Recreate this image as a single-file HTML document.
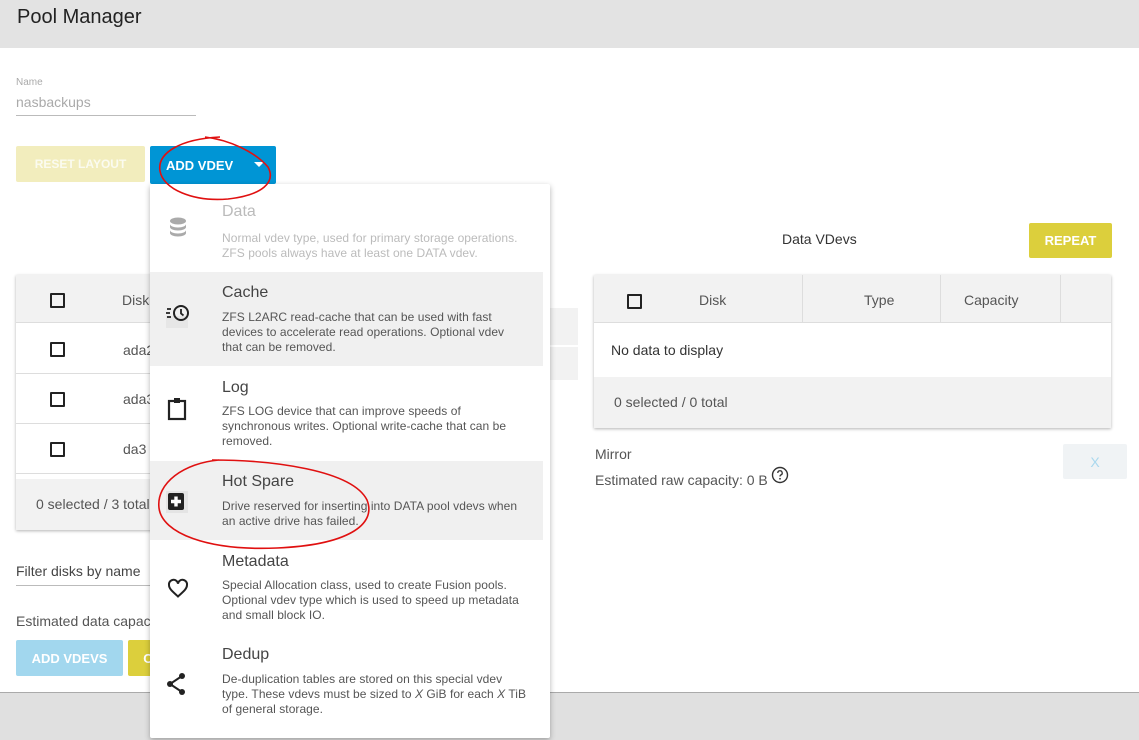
<!DOCTYPE html>
<html><head><meta charset="utf-8"><style>
*{box-sizing:border-box;margin:0;padding:0}
body{width:1139px;height:740px;position:relative;overflow:hidden;background:#fff;font-family:"Liberation Sans",Roboto,sans-serif;color:#333}
.a{position:absolute}
.btn{position:absolute;color:#fff;font-weight:bold;font-size:13px;display:flex;align-items:center;justify-content:center;border-radius:2px}
.cb{position:absolute;width:15px;height:15px;border:2px solid #222;border-radius:1px}
.mi{position:absolute;left:150px;width:393px}
.mi .t{position:absolute;left:72px;font-size:16px;color:#444}
.mi .d{position:absolute;left:72px;font-size:12px;line-height:15px;color:#555;white-space:nowrap;letter-spacing:0.05px}
.mi svg{position:absolute;left:16px}
</style></head><body>
<div class="a" style="left:0;top:0;width:1139px;height:48px;background:#e3e3e3"></div>
<div class="a" style="left:17px;top:6px;font-size:20px;color:#222">Pool Manager</div>
<div class="a" style="left:16px;top:77px;font-size:10px;color:#aaa">Name</div>
<div class="a" style="left:16px;top:94px;font-size:14px;color:#aaa">nasbackups</div>
<div class="a" style="left:16px;top:115px;width:180px;height:1px;background:#bbb"></div>
<div class="btn" style="left:16px;top:146px;width:129px;height:36px;background:#f2edbd;color:#fbfbf0;font-size:12px">RESET LAYOUT</div>
<div class="btn" style="left:150px;top:146px;width:126px;height:38px;background:#0095d5;justify-content:flex-start;padding-left:16px">ADD VDEV<span style="position:absolute;left:104px;top:16px;border:5px solid transparent;border-top:5px solid #fff;border-bottom:0"></span></div>

<div class="a" style="left:16px;top:275px;width:140px;height:255px;box-shadow:0 1px 3px rgba(0,0,0,.3);background:#fff"></div>
<div class="a" style="left:16px;top:275px;width:140px;height:48px;background:#f2f2f2;border-bottom:1px solid #ddd"></div>
<div class="cb" style="left:50px;top:293px"></div><div class="a" style="left:122px;top:292px;font-size:14px;color:#555">Disk</div>
<div class="cb" style="left:50px;top:342px"></div><div class="a" style="left:123px;top:342px;font-size:14px;color:#555">ada2</div>
<div class="a" style="left:16px;top:373px;width:140px;height:1px;background:#ddd"></div>
<div class="cb" style="left:50px;top:392px"></div><div class="a" style="left:123px;top:391px;font-size:14px;color:#555">ada3</div>
<div class="a" style="left:16px;top:423px;width:140px;height:1px;background:#ddd"></div>
<div class="cb" style="left:50px;top:442px"></div><div class="a" style="left:123px;top:441px;font-size:14px;color:#555">da3</div>
<div class="a" style="left:16px;top:473px;width:140px;height:1px;background:#ddd"></div>
<div class="a" style="left:16px;top:479px;width:140px;height:51px;background:#f2f2f2"></div>
<div class="a" style="left:36px;top:496px;font-size:14px;color:#555">0 selected / 3 total</div>
<div class="a" style="left:16px;top:563px;font-size:14px;color:#444">Filter disks by name</div>
<div class="a" style="left:16px;top:585px;width:140px;height:1px;background:#bbb"></div>
<div class="a" style="left:16px;top:613px;font-size:14px;color:#555">Estimated data capacity</div>
<div class="btn" style="left:16px;top:640px;width:107px;height:36px;background:#a2d7ee">ADD VDEVS</div>
<div class="btn" style="left:128px;top:640px;width:40px;height:36px;background:#dccf3c">C</div>

<div class="a" style="left:549px;top:308px;width:29px;height:37px;background:#f2f2f2"></div>
<div class="a" style="left:549px;top:347px;width:29px;height:33px;background:#f2f2f2"></div>

<div class="a" style="left:782px;top:231px;font-size:14px;color:#333">Data VDevs</div>
<div class="btn" style="left:1029px;top:223px;width:83px;height:35px;background:#dccf3c">REPEAT</div>
<div class="a" style="left:594px;top:275px;width:517px;height:153px;box-shadow:0 1px 3px rgba(0,0,0,.3);background:#fff"></div>
<div class="a" style="left:594px;top:275px;width:517px;height:48px;background:#f2f2f2;border-bottom:1px solid #ddd"></div>
<div class="a" style="left:802px;top:275px;width:1px;height:48px;background:#ddd"></div>
<div class="a" style="left:940px;top:275px;width:1px;height:48px;background:#ddd"></div>
<div class="a" style="left:1060px;top:275px;width:1px;height:48px;background:#ddd"></div>
<div class="cb" style="left:627px;top:294px"></div>
<div class="a" style="left:699px;top:292px;font-size:14px;color:#555">Disk</div>
<div class="a" style="left:864px;top:292px;font-size:14px;color:#555">Type</div>
<div class="a" style="left:964px;top:292px;font-size:14px;color:#555">Capacity</div>
<div class="a" style="left:611px;top:342px;font-size:14px;color:#333">No data to display</div>
<div class="a" style="left:594px;top:377px;width:517px;height:51px;background:#f2f2f2"></div>
<div class="a" style="left:614px;top:394px;font-size:14px;color:#555">0 selected / 0 total</div>
<div class="a" style="left:595px;top:446px;font-size:14px;color:#555">Mirror</div>
<div class="a" style="left:595px;top:472px;font-size:14px;color:#555">Estimated raw capacity: 0 B</div>
<svg class="a" style="left:771px;top:466px" width="18" height="18" viewBox="0 0 18 18"><circle cx="9" cy="9" r="7.5" fill="none" stroke="#333" stroke-width="1.4"/><path d="M6.8 7a2.2 2.2 0 1 1 3 2c-.6.3-.8.7-.8 1.5" fill="none" stroke="#333" stroke-width="1.3"/><circle cx="9" cy="12.8" r=".9" fill="#333"/></svg>
<div class="btn" style="left:1063px;top:444px;width:64px;height:35px;background:#f0f3f5;color:#aad8ee;font-weight:normal;font-size:14px">X</div>

<div class="a" style="left:0;top:692px;width:1139px;height:48px;background:#e0e0e0;border-top:1px solid #aaa"></div>

<div class="a" style="left:150px;top:184px;width:400px;height:554px;background:#fff;box-shadow:0 2px 6px rgba(0,0,0,.3);border-radius:2px"></div>
<div class="mi" style="top:195px;height:75px">
<div class="t" style="top:8px;color:#bbb">Data</div>
<div class="d" style="top:36px;color:#bbb">Normal vdev type, used for primary storage operations.<br>ZFS pools always have at least one DATA vdev.</div>
<svg style="top:20px" width="24" height="24" viewBox="0 0 24 24"><g fill="#aaa"><ellipse cx="12" cy="6" rx="8" ry="3.5"/><path d="M4 9c0 2 3.6 3.5 8 3.5s8-1.5 8-3.5v3c0 2-3.6 3.5-8 3.5S4 14 4 12z"/><path d="M4 15c0 2 3.6 3.5 8 3.5s8-1.5 8-3.5v3c0 2-3.6 3.5-8 3.5S4 20 4 18z"/></g></svg>
</div>
<div class="mi" style="top:272px;height:94px;background:#f0f0f0">
<div class="t" style="top:12px">Cache</div>
<div class="d" style="top:38px">ZFS L2ARC read-cache that can be used with fast<br>devices to accelerate read operations. Optional vdev<br>that can be removed.</div>
<svg style="top:31px" width="26" height="26" viewBox="0 0 26 26"><rect x="0" y="13" width="22" height="12" fill="#e6e6e6"/><circle cx="15" cy="10" r="7" fill="none" stroke="#222" stroke-width="2"/><path d="M15 6v4.5l2.5 2" fill="none" stroke="#222" stroke-width="1.8"/><path d="M1 6h4M0 10h4M1 14h4" stroke="#222" stroke-width="1.8"/></svg>
</div>
<div class="mi" style="top:368px;height:90px">
<div class="t" style="top:11px">Log</div>
<div class="d" style="top:36px">ZFS LOG device that can improve speeds of<br>synchronous writes. Optional write-cache that can be<br>removed.</div>
<svg style="top:28px" width="24" height="26" viewBox="0 0 24 26"><rect x="3" y="5" width="16" height="18" fill="none" stroke="#222" stroke-width="2.2"/><rect x="8" y="2" width="6" height="5" fill="#222"/></svg>
</div>
<div class="mi" style="top:461px;height:79px;background:#f0f0f0">
<div class="t" style="top:12px">Hot Spare</div>
<div class="d" style="top:38px">Drive reserved for inserting into DATA pool vdevs when<br>an active drive has failed.</div>
<svg style="top:30px" width="22" height="22" viewBox="0 0 22 22"><rect x="0" y="0" width="22" height="22" fill="#e4e4e4"/><rect x="2" y="2" width="16" height="17" rx="2" fill="#222"/><path d="M10 5.5v10M5 10.5h10" stroke="#fff" stroke-width="3.4"/></svg>
</div>
<div class="mi" style="top:545px;height:85px">
<div class="t" style="top:8px">Metadata</div>
<div class="d" style="top:33px">Special Allocation class, used to create Fusion pools.<br>Optional vdev type which is used to speed up metadata<br>and small block IO.</div>
<svg style="top:32px" width="24" height="22" viewBox="0 0 24 22"><path d="M12 19.5l-1.3-1.2C5.8 13.9 3 11.4 3 8a4.5 4.5 0 0 1 9-1.3A4.5 4.5 0 0 1 21 8c0 3.4-2.8 5.900-7.7 10.3z" fill="none" stroke="#222" stroke-width="2"/></svg>
</div>
<div class="mi" style="top:640px;height:85px">
<div class="t" style="top:6px">Dedup</div>
<div class="d" style="top:32px">De-duplication tables are stored on this special vdev<br>type. These vdevs must be sized to <i>X</i> GiB for each <i>X</i> TiB<br>of general storage.</div>
<svg style="top:32px" width="22" height="24" viewBox="0 0 22 24"><g fill="#222"><circle cx="16" cy="4" r="3"/><circle cx="4" cy="12" r="3"/><circle cx="16" cy="20" r="3"/></g><path d="M16 4L4 12l12 8" fill="none" stroke="#222" stroke-width="2"/></svg>
</div>

<svg class="a" style="left:0;top:0" width="1139" height="740" viewBox="0 0 1139 740">
<path d="M205 137c25 3 50 15 63 30 8 15-5 28-40 32-35 3-65-10-68-28-3-18 20-32 60-34" fill="none" stroke="#e01010" stroke-width="1.6"/>
<path d="M212 460c60 0 140 10 155 40 10 25-20 45-90 48-70 3-115-15-118-40-3-25 25-45 60-48" fill="none" stroke="#e01010" stroke-width="1.6"/>
</svg>
</body></html>
